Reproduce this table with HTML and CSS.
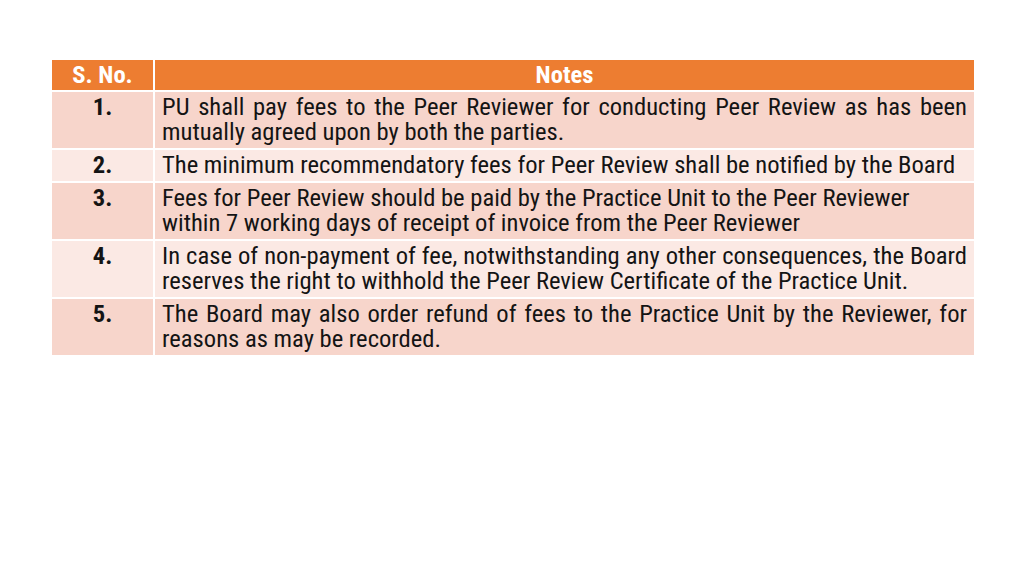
FILE: index.html
```html
<!DOCTYPE html>
<html>
<head>
<meta charset="utf-8">
<link rel="stylesheet" href="styles.css">
</head>
<body>
<div class="page">
  <div class="table">
    <div class="cell head num">S. No.</div>
    <div class="cell head">Notes</div>

    <div class="cell odd num">1.</div>
    <div class="cell odd note just">PU shall pay fees to the Peer Reviewer for conducting Peer Review as has been mutually agreed upon by both the parties.</div>

    <div class="cell even num">2.</div>
    <div class="cell even note">The minimum recommendatory fees for Peer Review shall be notified by the Board</div>

    <div class="cell odd num">3.</div>
    <div class="cell odd note">Fees for Peer Review should be paid by the Practice Unit to the Peer Reviewer<br>within 7 working days of receipt of invoice from the Peer Reviewer</div>

    <div class="cell even num">4.</div>
    <div class="cell even note just">In case of non-payment of fee, notwithstanding any other consequences, the Board reserves the right to withhold the Peer Review Certificate of the Practice Unit.</div>

    <div class="cell odd num">5.</div>
    <div class="cell odd note just">The Board may also order refund of fees to the Practice Unit by the Reviewer, for reasons as may be recorded.</div>
  </div>
</div>
</body>
</html>
```

FILE: styles.css
```css
html, body {
  margin: 0;
  padding: 0;
  background: #ffffff;
}
.page {
  width: 1024px;
  height: 575px;
  padding: 60px 50px 0 52px;
  box-sizing: border-box;
}
.table {
  display: grid;
  grid-template-columns: 101px 1fr;
  gap: 2px;
  width: 922px;
  font-family: "Roboto Condensed", "Liberation Sans Narrow", "Liberation Sans", sans-serif;
  font-size: 24.6px;
  line-height: 25px;
  color: #141414;
}
.cell {
  padding: 2px 7px 4px 7px;
}
.head {
  background: #ed7d31;
  color: #ffffff;
  font-weight: bold;
  text-align: center;
  padding: 2px 6px 3px;
}
.num {
  text-align: center;
  font-weight: bold;
  padding-left: 0;
  padding-right: 0;
}
.odd {
  background: #f7d5cb;
}
.even {
  background: #fbe9e4;
}
.just {
  text-align: justify;
}
```
